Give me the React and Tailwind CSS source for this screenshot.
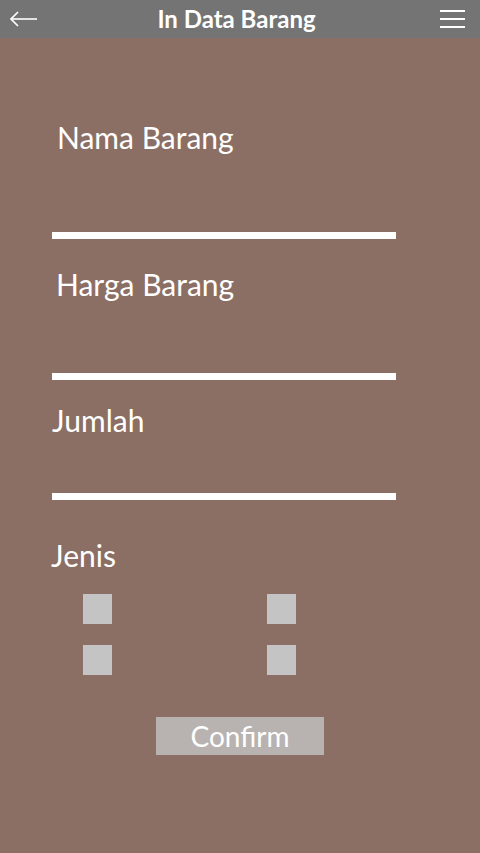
import React from "react";

const Label = ({ children, className }) => (
  <div className={`text-[30px] leading-[36px] text-white ${className}`}>{children}</div>
);

const Line = ({ className }) => <div className={`h-[7px] w-[344px] bg-white ${className}`} />;

const Box = () => <div className="h-[30px] w-[29px] bg-[#c4c4c4]" />;

const App = () => {
  return (
    <div className="flex h-[853px] w-full flex-col bg-[#8c6f64] font-['Lato','Liberation_Sans',sans-serif]">
      {/* Header */}
      <header className="grid h-[38px] grid-cols-[1fr_auto_1fr] items-center bg-[#747474] pl-[10px] pr-[15px]">
        <svg width="28" height="16" viewBox="0 0 28 16" fill="none" stroke="white" strokeWidth="1.6">
          <path d="M1 8 H27" />
          <path d="M8 1 L1 8 L8 15" />
        </svg>
        <h1 className="mr-[2px] text-[24px] font-bold text-white">In Data Barang</h1>
        <svg className="justify-self-end" width="25" height="20" viewBox="0 0 25 20" fill="none" stroke="white" strokeWidth="2">
          <path d="M0 2 H25" />
          <path d="M0 10 H25" />
          <path d="M0 18 H25" />
        </svg>
      </header>

      {/* Form */}
      <div className="flex flex-col px-[52px]">
        <Label className="mt-[81px] ml-[5px]">Nama Barang</Label>
        <Line className="mt-[77px]" />

        <Label className="mt-[27px] ml-[4px]">Harga Barang</Label>
        <Line className="mt-[71px]" />

        <Label className="mt-[22px]">Jumlah</Label>
        <Line className="mt-[55px]" />

        <Label className="mt-[37px] -ml-[1px]">Jenis</Label>
        <div className="mt-[21px] ml-[31px] grid w-[213px] grid-cols-[29px_29px] justify-between gap-y-[21px]">
          <Box />
          <Box />
          <Box />
          <Box />
        </div>

        <button className="mt-[42px] ml-[104px] h-[38px] w-[168px] bg-[#b8b3b0] text-[28px] leading-none text-white">
          Confirm
        </button>
      </div>
    </div>
  );
};

export default App;
